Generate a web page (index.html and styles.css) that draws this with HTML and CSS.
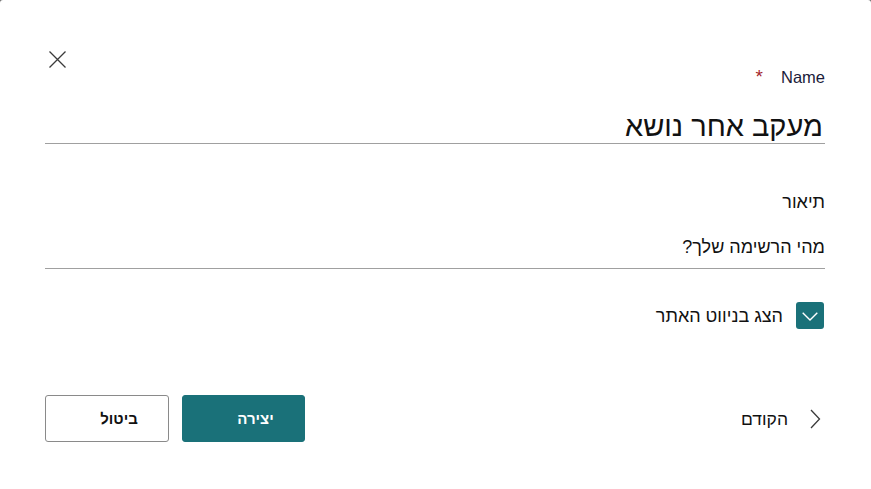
FILE: index.html
```html
<!DOCTYPE html>
<html lang="he">
<head>
<meta charset="utf-8">
<title>רשימה חדשה</title>
<link rel="stylesheet" href="styles.css">
</head>
<body>
<div class="dialog" dir="rtl">
  <div class="close-row">
    <button class="close-btn" aria-label="סגור">
      <svg width="17" height="17" viewBox="0 0 17 17"><path d="M0.5 0.5 L16.5 16.5 M16.5 0.5 L0.5 16.5" stroke="#3b3b3b" stroke-width="1.3" fill="none"/></svg>
    </button>
  </div>
  <div class="name-label"><span class="name-text" dir="ltr">Name</span><span class="req">*</span></div>
  <div class="title-field">מעקב אחר נושא</div>
  <div class="desc-label">תיאור</div>
  <div class="desc-field">מהי הרשימה שלך?</div>
  <div class="toggle-row">
    <span class="toggle-box">
      <svg width="16" height="9" viewBox="0 0 16 9"><path d="M0.7 0.7 L8 8 L15.3 0.7" stroke="#ffffff" stroke-width="1.4" fill="none"/></svg>
    </span>
    <span class="toggle-text">הצג בניווט האתר</span>
  </div>
  <div class="footer">
    <div class="prev">
      <svg width="20" height="20" viewBox="0 0 20 20"><path d="M6 1 L14.5 10 L6 19" stroke="#3b3b3b" stroke-width="1.3" fill="none"/></svg>
      <span class="prev-text">הקודם</span>
    </div>
    <div class="btns">
      <button class="btn btn-primary">יצירה</button>
      <button class="btn btn-secondary">ביטול</button>
    </div>
  </div>
</div>
</body>
</html>
```
FILE: styles.css
```css
html, body {
  margin: 0;
  padding: 0;
  height: 100%;
  background: #6e6e6e;
}
body {
  font-family: "Liberation Sans", "DejaVu Sans", sans-serif;
  color: #1b1b1b;
}
.dialog {
  background: #ffffff;
  border-radius: 3px 3px 0 0;
  height: 100%;
  box-sizing: border-box;
  padding: 51px 46px 0 45px;
  display: flex;
  flex-direction: column;
}
.close-row {
  display: flex;
  justify-content: flex-end;
  height: 17px;
}
.close-btn {
  border: 0;
  background: none;
  padding: 0;
  margin-left: 4px;
  width: 17px;
  height: 17px;
  display: block;
  cursor: pointer;
}
.close-btn svg { display: block; }
.name-label {
  font-size: 16.5px;
  line-height: 18px;
  display: flex;
  align-items: baseline;
}
.name-text {
  color: #1b1b3a;
  margin-left: 18px;
}
.req {
  color: #a4262c;
  font-size: 19px;
  margin-left: 0;
}
.title-field {
  margin-top: 23px;
  font-size: 29px;
  line-height: 34px;
  color: #111;
  border-bottom: 1px solid #a0a0a0;
  padding-right: 2px;
}
.desc-label {
  margin-top: 48px;
  font-size: 18px;
  line-height: 20px;
  color: #111;
}
.desc-field {
  margin-top: 25px;
  font-size: 18px;
  line-height: 20px;
  padding-bottom: 11px;
  color: #111;
  border-bottom: 1px solid #a0a0a0;
}
.toggle-row {
  margin-top: 33px;
  display: flex;
  align-items: center;
  gap: 13px;
}
.toggle-box {
  width: 28px;
  height: 27px;
  background: #1a7179;
  border-radius: 3px;
  display: flex;
  align-items: center;
  justify-content: center;
  margin-right: 1px;
}
.toggle-box svg { display: block; margin-top: 1px; }
.toggle-text {
  font-size: 18px;
  line-height: 20px;
  color: #111;
}
.footer {
  margin-top: 66px;
  display: flex;
  justify-content: space-between;
  align-items: center;
}
.prev {
  display: flex;
  align-items: center;
  gap: 17px;
}
.prev svg { display: block; }
.prev-text {
  font-size: 17.5px;
  line-height: 20px;
  color: #111;
}
.btns {
  display: flex;
  gap: 13px;
}
.btn {
  font-family: inherit;
  width: 124px;
  height: 47px;
  box-sizing: border-box;
  border-radius: 3px;
  font-size: 15px;
  font-weight: bold;
  padding: 0 0 0 24px;
  cursor: pointer;
}
.btn-primary {
  background: #1a7179;
  color: #ffffff;
  border: 1px solid #1a7179;
  width: 123px;
}
.btn-secondary {
  background: #ffffff;
  color: #111;
  border: 1px solid #8a8a8a;
}
```
